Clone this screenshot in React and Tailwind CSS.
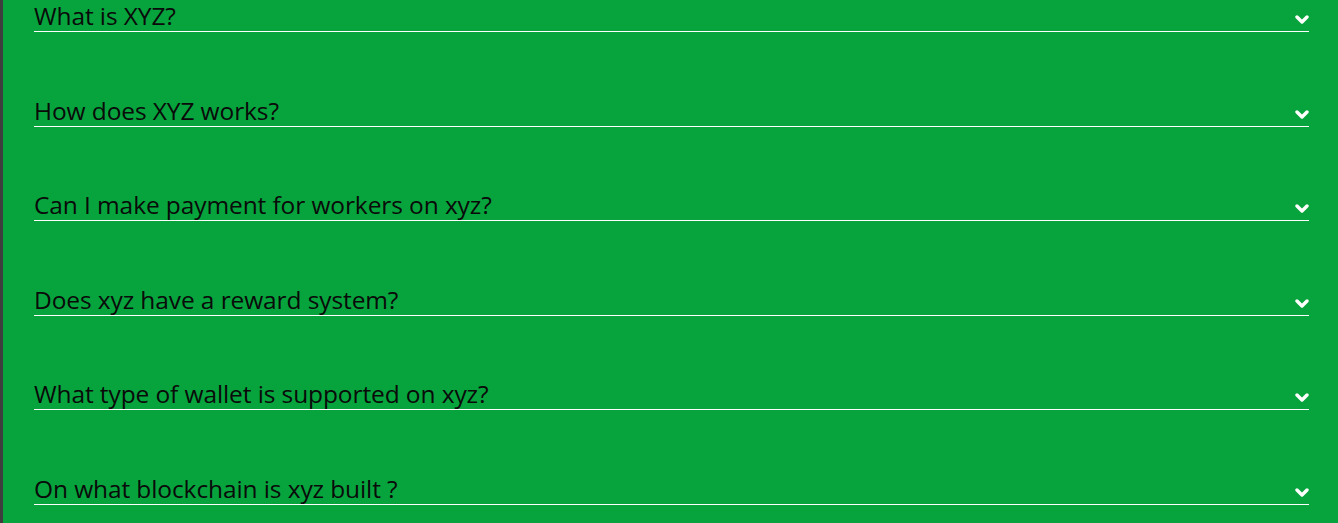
import React from 'react';

const questions = [
  'What is XYZ?',
  'How does XYZ works?',
  'Can I make payment for workers on xyz?',
  'Does xyz have a reward system?',
  'What type of wallet is supported on xyz?',
  'On what blockchain is xyz built ?',
];

const Chevron = () => (
  <svg width="14" height="11" viewBox="0 0 14 11" className="mt-[14px] self-start">
    <polyline points="2,3 7,8 12,3" fill="none" stroke="white" strokeWidth="3.4" strokeLinecap="round" strokeLinejoin="round" />
  </svg>
);

const FaqItem = ({ text }) => (
  <div className="flex h-[32px] items-end justify-between border-b border-white">
    <span className="text-[24.5px] leading-[30px] tracking-[-0.1px] text-[#0a0a0a]">{text}</span>
    <Chevron />
  </div>
);

export default function App() {
  return (
    <div
      className="flex h-[523px] w-full overflow-hidden border-l-[3px] border-[#3d3d3d] bg-[#07a43d] pl-[31px] pr-[29px]"
      style={{ fontFamily: '"Open Sans", sans-serif' }}
    >
      <div className="flex w-full flex-col gap-[62.6px]">
        {questions.map((q) => (
          <FaqItem key={q} text={q} />
        ))}
      </div>
    </div>
  );
}
